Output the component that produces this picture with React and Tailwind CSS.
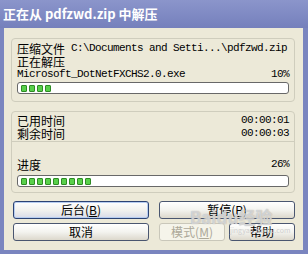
import React from 'react';

const cjk = "font-['Noto_Sans_CJK_SC','Liberation_Sans',sans-serif]";
const mono = "font-['Liberation_Mono','Noto_Sans_CJK_SC',monospace] text-[11px] tracking-[-0.6px]";

const Blocks = ({ count }) => (
  <div className="h-[12px] border border-[#686868] rounded-[3px] bg-white flex items-center gap-[2px] pl-[3px]">
    {Array.from({ length: count }).map((_, i) => (
      <div
        key={i}
        className="w-[6px] h-[7px] rounded-[1px] border border-[#2f8a25] bg-[#58d04a]"
      />
    ))}
  </div>
);

const Button = ({ children, focused, disabled, className = '' }) => (
  <div
    className={`h-[18px] rounded-[3px] border flex items-center justify-center text-[12px] leading-none ${cjk} ${
      disabled
        ? 'border-[#c9c7ba] bg-[#f5f4ea] text-[#aca899]'
        : focused
        ? 'border-[#2c4374] bg-gradient-to-b from-[#ffffff] via-[#f2f2ee] to-[#d8dbe8] text-black shadow-[inset_0_0_0_1px_#b7cdf0]'
        : 'border-[#4a5670] bg-gradient-to-b from-[#ffffff] via-[#f3f3ef] to-[#dcd8cc] text-black'
    } ${className}`}
  >
    {children}
  </div>
);

const Line = ({ children, right }) => (
  <div className="h-[13px] flex items-center justify-between text-[12px] leading-none text-black">
    <div className="flex items-center">{children}</div>
    {right && <span className={mono}>{right}</span>}
  </div>
);

export default function App() {
  return (
    <div className="w-[308px] h-[254px] bg-[#7a85bf] flex flex-col overflow-hidden">
      <div
        className={`h-[28px] shrink-0 bg-gradient-to-b from-[#8b95cb] to-[#7580bc] flex items-center pl-[3px] text-white font-bold text-[13px] ${cjk}`}
      >
        正在从 pdfzwd.zip 中解压
      </div>

      <div className="relative flex-1 ml-[4px] mr-[5px] mb-[4px] bg-[#ece9d8] flex flex-col pt-[10px] pl-[7px] pr-[8px]">
        <div className="border border-[#cfcdbd] rounded-[4px] pl-[5px] pr-[5px] pt-[3px] pb-[7px]">
          <Line>
            <span className={cjk}>压缩文件</span>
            <span className={`${mono} whitespace-pre`}>
              {' C:\\Documents and Setti...\\pdfzwd.zip'}
            </span>
          </Line>
          <Line>
            <span className={cjk}>正在解压</span>
          </Line>
          <Line right="10%">
            <span className={mono}>Microsoft_DotNetFXCHS2.0.exe</span>
          </Line>
          <div className="mt-[1px]">
            <Blocks count={4} />
          </div>
        </div>

        <div className="mt-[9px] border border-[#cfcdbd] rounded-[4px] pt-[2px] pb-[5px]">
          <div className="px-[5px]">
            <Line right="00:00:01">
              <span className={cjk}>已用时间</span>
            </Line>
            <Line right="00:00:03">
              <span className={cjk}>剩余时间</span>
            </Line>
          </div>
          <div className="mt-[1px] border-t border-[#cfcdbd]" />
          <div className="px-[5px] mt-[16px]">
            <Line right="26%">
              <span className={cjk}>进度</span>
            </Line>
            <div className="mt-[4px]">
              <Blocks count={9} />
            </div>
          </div>
        </div>

        <div className="mt-[8px] grid grid-cols-2 gap-x-[10px] gap-y-[4px] pl-[2px]">
          <Button focused>
            后台(<u>B</u>)
          </Button>
          <Button>
            暂停(<u>P</u>)
          </Button>
          <Button>取消</Button>
          <div className="flex gap-[4px]">
            <Button disabled className="w-[66px]">
              模式(<u>M</u>)
            </Button>
            <Button className="flex-1">帮助</Button>
          </div>
        </div>

        <div
          className={`absolute left-[186px] top-[180px] text-[17px] font-bold text-white/50 leading-none pointer-events-none [text-shadow:0_0_1px_#a0a0a0] ${cjk}`}
        >
          Baidu经验
        </div>
        <div
          className={`absolute left-[226px] top-[199px] text-[7px] text-[#cfcfcf] leading-none pointer-events-none ${cjk}`}
        >
          jingyan.baidu.com
        </div>
      </div>
    </div>
  );
}
